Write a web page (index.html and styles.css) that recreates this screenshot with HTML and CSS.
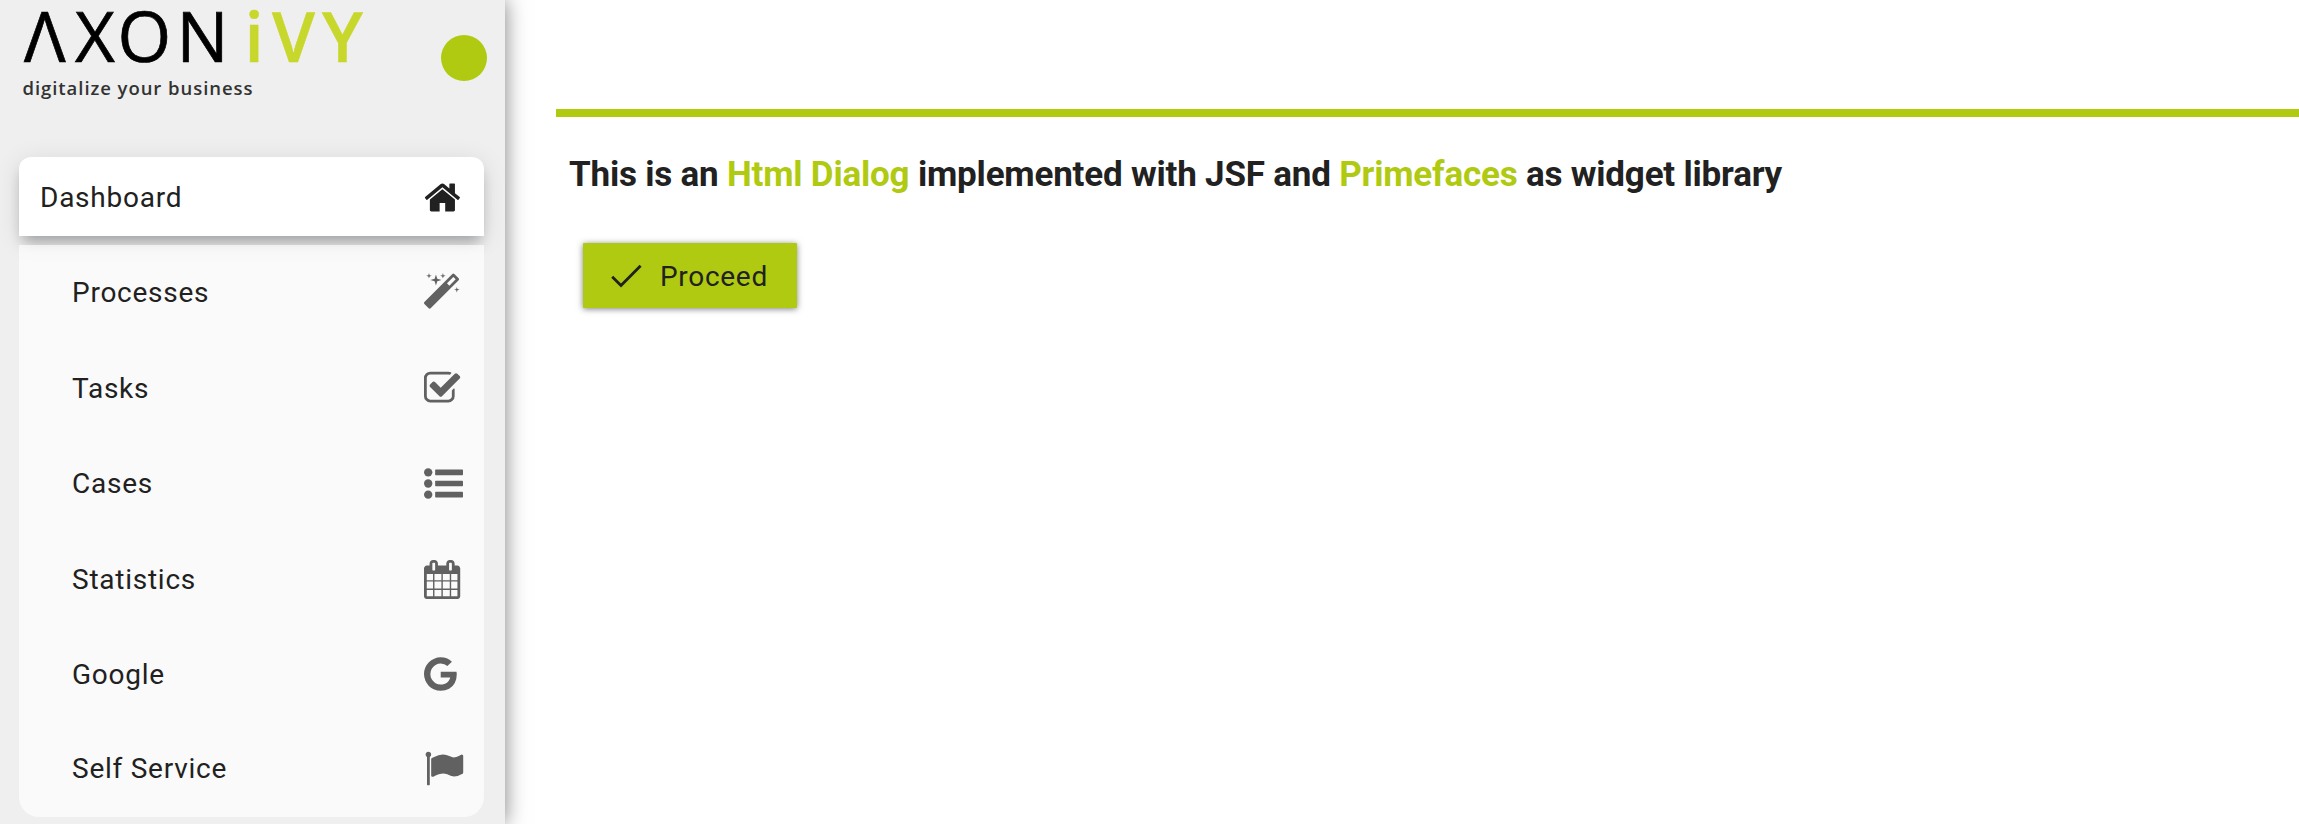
FILE: index.html
```html
<!DOCTYPE html>
<html lang="en">
<head>
<meta charset="utf-8">
<title>Axon Ivy</title>
<link rel="stylesheet" href="styles.css">
</head>
<body>
<div class="layout">
  <aside class="sidebar">
    <header class="brand">
      <svg class="logo" width="360" height="110" viewBox="0 0 360 110" role="img" aria-label="Axon Ivy">
        <text class="logo-dark" y="61.5" x="24 75 117.5 176.5">ΛXON</text>
        <text class="logo-green" y="61.5" x="244.5 272 322">iVY</text>
        <text class="tagline" x="22.5" y="94.5" textLength="230">digitalize your business</text>
      </svg>
      <span class="toggle"></span>
    </header>
    <nav class="menu">
      <a class="item item-active"><span>Dashboard</span>
        <svg class="icon" viewBox="50 0 1792 1792"><path d="M1472 992v480q0 26-19 45t-45 19h-384v-384h-256v384h-384q-26 0-45-19t-19-45v-480q0-1 .5-3t.5-3l575-474 575 474q1 2 1 6zm223-69l-62 74q-8 9-21 11h-3q-13 0-21-7l-692-577-692 577q-12 8-24 7-13-2-21-11l-62-74q-8-10-7-23.5t11-21.5l719-599q32-26 76-26t76 26l244 204v-195q0-14 9-23t23-9h192q14 0 23 9t9 23v408l219 182q10 8 11 21.5t-7 23.5z"/></svg></a>
      <div class="submenu">
        <a class="item"><span>Processes</span>
          <svg class="icon" viewBox="91 0 1792 1792"><path d="M1254 581l293-293-107-107-293 293zm447-293q0 27-18 45l-1286 1286q-18 18-45 18t-45-18l-198-198q-18-18-18-45t18-45l1286-1286q18-18 45-18t45 18l198 198q18 18 18 45zm-1351-190l98 30-98 30-30 98-30-98-98-30 98-30 30-98zm350 162l196 60-196 60-60 196-60-196-196-60 196-60 60-196zm930 478l98 30-98 30-30 98-30-98-98-30 98-30 30-98zm-640-640l98 30-98 30-30 98-30-98-98-30 98-30 30-98z"/></svg></a>
        <a class="item"><span>Tasks</span>
          <svg class="icon" viewBox="64 0 1792 1792"><path d="M1472 930v318q0 119-84.5 203.5t-203.5 84.5h-832q-119 0-203.5-84.5t-84.5-203.5v-832q0-119 84.5-203.5t203.5-84.5h832q63 0 117 25 15 7 18 23 3 17-9 29l-49 49q-10 10-23 10-3 0-9-2-23-6-45-6h-832q-66 0-113 47t-47 113v832q0 66 47 113t113 47h832q66 0 113-47t47-113v-254q0-13 9-22l64-64q10-10 23-10 6 0 12 3 20 8 20 29zm231-489l-814 814q-24 24-57 24t-57-24l-430-430q-24-24-24-57t24-57l110-110q24-24 57-24t57 24l263 263 647-647q24-24 57-24t57 24l110 110q24 24 24 57t-24 57z"/></svg></a>
        <a class="item"><span>Cases</span>
          <svg class="icon" viewBox="0 0 1792 1792"><circle cx="192" cy="384" r="192"/><circle cx="192" cy="896" r="192"/><circle cx="192" cy="1408" r="192"/><rect x="512" y="256" width="1280" height="256" rx="32"/><rect x="512" y="768" width="1280" height="256" rx="32"/><rect x="512" y="1280" width="1280" height="256" rx="32"/></svg></a>
        <a class="item"><span>Statistics</span>
          <svg class="icon" viewBox="64 0 1792 1792"><path d="M192 1664h288v-288h-288v288zm352 0h320v-288h-320v288zm-352-352h288v-320h-288v320zm352 0h320v-320h-320v320zm-352-384h288v-288h-288v288zm736 736h320v-288h-320v288zm-384-736h320v-288h-320v288zm768 736h288v-288h-288v288zm-384-352h320v-320h-320v320zm-352-864v-288q0-13-9.5-22.5t-22.5-9.5h-64q-13 0-22.5 9.5t-9.5 22.5v288q0 13 9.5 22.5t22.5 9.5h64q13 0 22.5-9.5t9.5-22.5zm736 864h288v-320h-288v320zm-384-384h320v-288h-320v288zm384 0h288v-288h-288v288zm32-480v-288q0-13-9.5-22.5t-22.5-9.5h-64q-13 0-22.5 9.5t-9.5 22.5v288q0 13 9.5 22.5t22.5 9.5h64q13 0 22.5-9.5t9.5-22.5zm384-64v1280q0 52-38 90t-90 38h-1408q-52 0-90-38t-38-90v-1280q0-52 38-90t90-38h128v-96q0-66 47-113t113-47h64q66 0 113 47t47 113v96h384v-96q0-66 47-113t113-47h64q66 0 113 47t47 113v96h128q52 0 90 38t38 90z"/></svg></a>
        <a class="item"><span>Google</span>
          <svg class="icon" viewBox="128 20 1792 1792"><path d="M896 786h725q12 67 12 128 0 217-91 387.5t-259.5 266.5-386.5 96q-157 0-299-60.5t-245-163.5-163.5-245-60.5-299 60.5-299 163.5-245 245-163.5 299-60.5q300 0 515 201l-209 201q-123-119-306-119-129 0-238.5 65t-173.5 176.5-64 243.5 64 243.5 173.5 176.5 238.5 65q87 0 160-24t120-60 82-82 51.5-87 22.5-78h-436v-264z"/></svg></a>
        <a class="item item-last"><span>Self Service</span>
          <svg class="icon" viewBox="-10 0 1792 1792"><path d="M320 256q0 72-64 110v1266q0 13-9.5 22.5t-22.5 9.5h-64q-13 0-22.5-9.5t-9.5-22.5v-1266q-64-38-64-110 0-53 37.5-90.5t90.5-37.5 90.5 37.5 37.5 90.5zm1472 64v763q0 25-12.5 38.5t-39.5 27.5q-215 116-369 116-61 0-123.5-22t-108.5-48-115.5-48-142.5-22q-192 0-464 146-17 9-33 9-26 0-45-19t-19-45v-742q0-32 31-55 21-14 79-43 236-120 421-120 107 0 200 29t219 88q38 19 88 19 54 0 117.5-21t110-47 88-47 54.5-21q26 0 45 19t19 45z"/></svg></a>
      </div>
    </nav>
  </aside>
  <main class="content">
    <h1 class="title">This is an <em>Html Dialog</em> implemented with JSF and <em>Primefaces</em> as widget library</h1>
    <button class="proceed" type="button">
      <svg class="check" width="31" height="24" viewBox="0 0 31 24"><path d="M1.2 12.8 10 21.6 29.6 1.8"/></svg>
      <span>Proceed</span>
    </button>
  </main>
</div>
</body>
</html>
```
FILE: styles.css
```css
* { box-sizing: border-box; }
body {
  margin: 0;
  background: #fff;
  color: #212121;
  font-family: Roboto, "Liberation Sans", sans-serif;
  overflow: hidden;
}
.layout { display: flex; height: 824px; }
.sidebar {
  flex: none;
  width: 505px;
  padding: 0 21px 0 19px;
  background: #efefef;
  box-shadow: 0 0 20px rgba(0, 0, 0, .5);
}
.brand {
  display: flex;
  justify-content: space-between;
  height: 157px;
  margin-left: -19px;
}
.logo { flex: none; width: 360px; height: 110px; overflow: visible; }
.logo-dark, .logo-green { font-family: "Open Sans", sans-serif; font-size: 69px; }
.logo-dark { fill: #000; stroke: #000; stroke-width: .7px; }
.logo-green { fill: #c8d72b; stroke: #c8d72b; stroke-width: .5px; font-weight: 600; }
.tagline { font-family: "Open Sans", sans-serif; font-size: 18.5px; font-weight: 600; fill: #333; }
.toggle {
  width: 46px;
  height: 46px;
  margin: 35px -3px 0 0;
  border-radius: 50%;
  background: #afca11;
}
.item {
  display: flex;
  align-items: center;
  justify-content: space-between;
  height: 95.5px;
  padding: 0 21px 0 53px;
  font-size: 28px;
  letter-spacing: .75px;
}
.item-active {
  height: 79px;
  margin-bottom: 9px;
  padding: 1px 21px 0;
  border-radius: 12px 12px 0 0;
  background: #fff;
  box-shadow: 0 10px 14px -4px rgba(0, 8, 16, .28), 0 4px 26px rgba(0, 0, 0, .1);
}
.item-last { height: 91px; }
.submenu {
  position: relative;
  height: 571.5px;
  border-radius: 0 0 20px 20px;
  background: rgba(255, 255, 255, .66);
}
.icon { width: 39px; height: 39px; fill: #616161; overflow: visible; }
.item-active .icon { fill: #212121; }
.content {
  flex: 1;
  margin: 109px 0 0 51px;
  border-top: 8px solid #afca11;
}
.title {
  margin: 35px 0 0 13px;
  font-size: 35px;
  line-height: 46px;
  font-weight: 700;
  letter-spacing: -.2px;
  white-space: nowrap;
}
.title em { font-style: normal; color: #afca11; }
.proceed {
  display: flex;
  align-items: center;
  gap: 18px;
  width: 214px;
  height: 65px;
  margin: 45px 0 0 27px;
  padding: 1px 0 0 28px;
  border: 0;
  border-radius: 1px;
  background: #afca11;
  box-shadow: 0 1px 6px rgba(0, 0, 0, .5);
  color: #212121;
  font: 28px Roboto, sans-serif;
  letter-spacing: .7px;
}
.check { fill: none; stroke: #212121; stroke-width: 2.8; }
```
